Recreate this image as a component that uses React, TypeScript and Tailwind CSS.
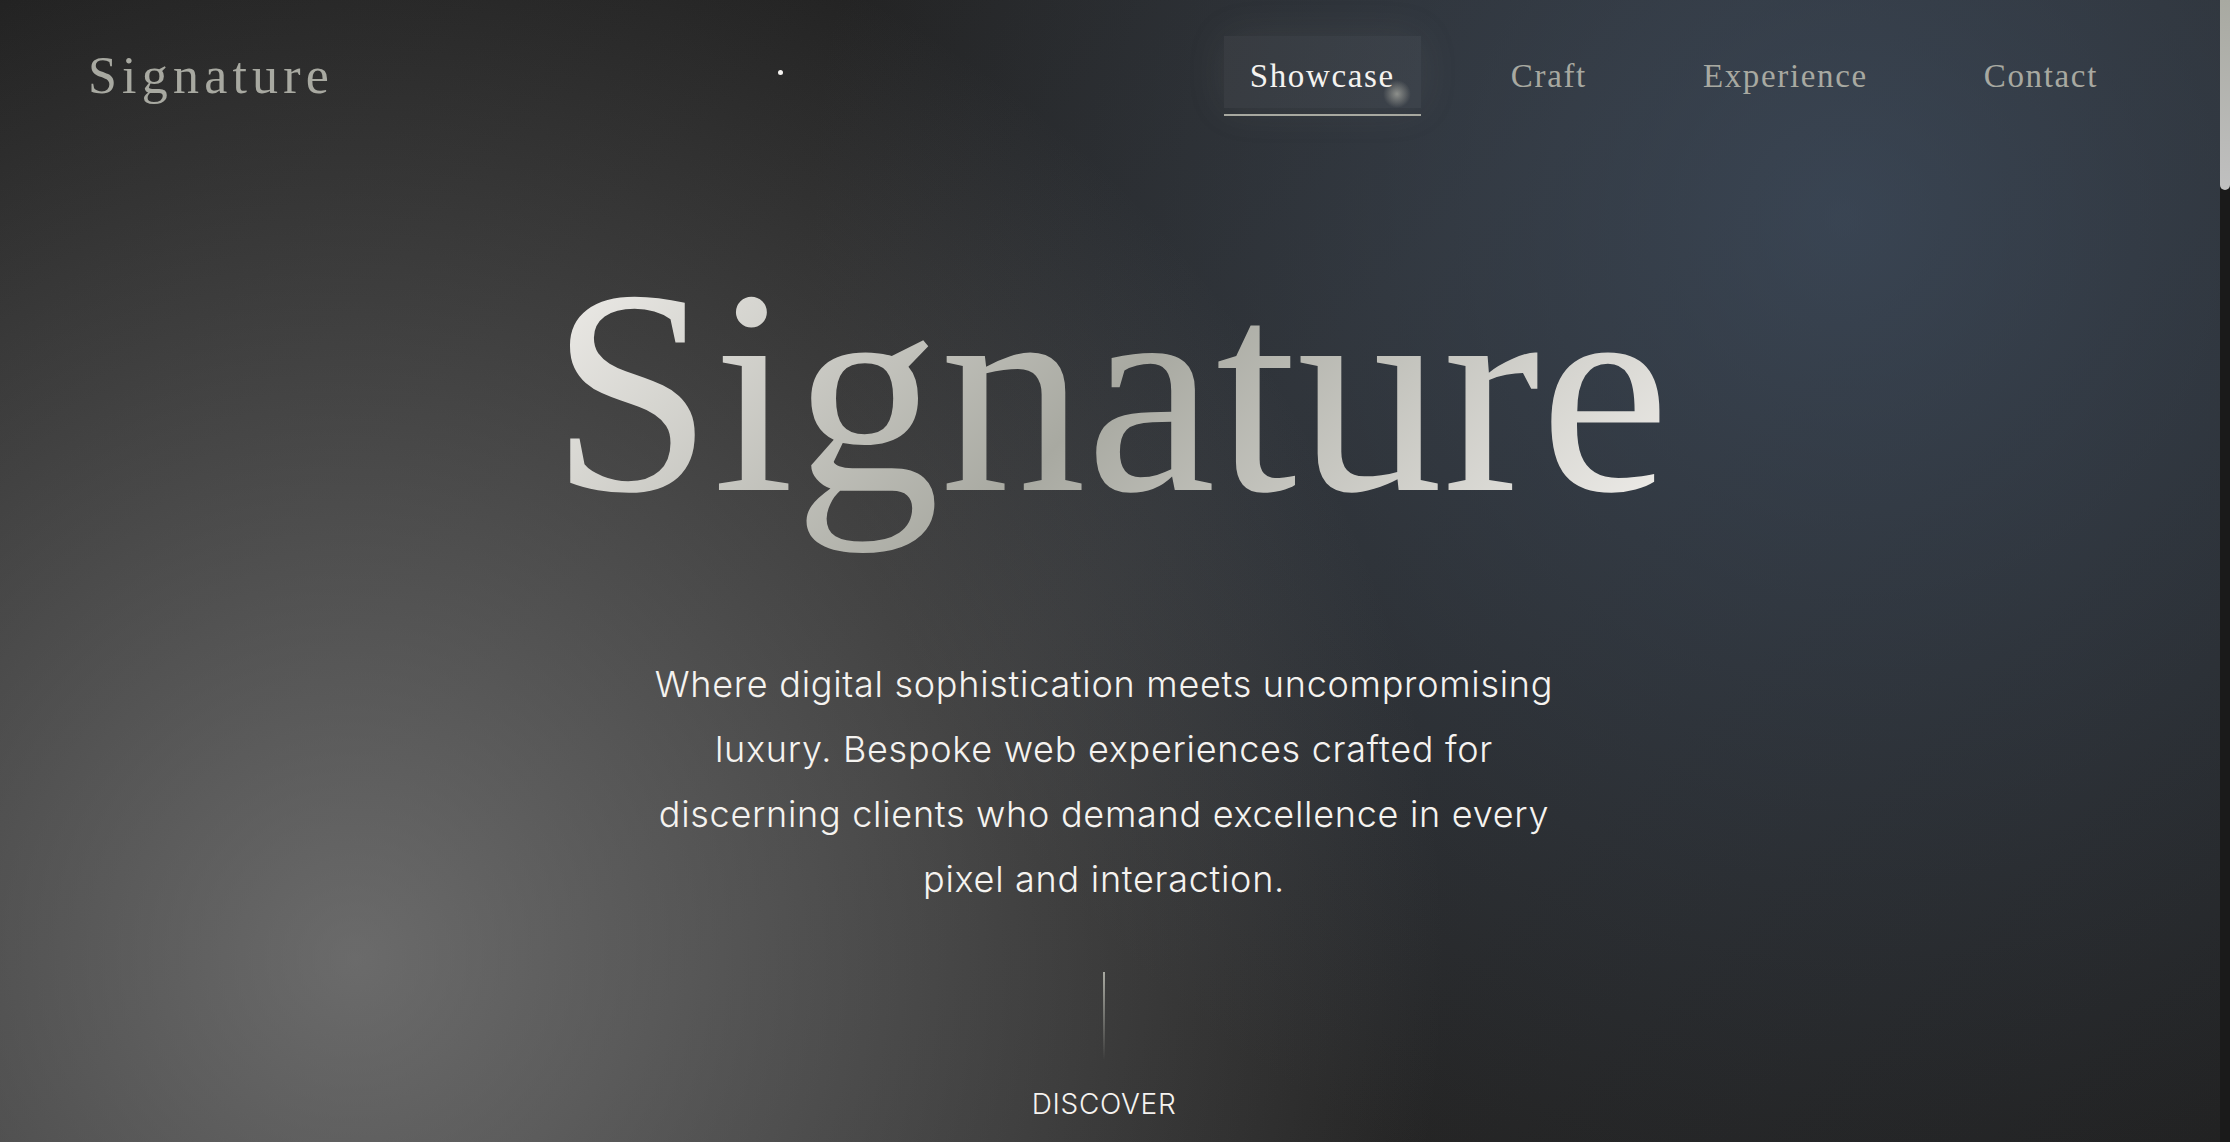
import React, { useState } from 'react';

const links = ['Showcase', 'Craft', 'Experience', 'Contact'];

const App: React.FC = () => {
  const [active, setActive] = useState('Showcase');

  return (
    <div className="flex min-h-screen bg-[#1a1a1a] font-['Inter',sans-serif] text-[#f5f3f0]">
      <div className="relative flex min-h-screen flex-1 flex-col overflow-hidden bg-[radial-gradient(circle_at_16%_84%,rgba(168,168,168,0.53)_0%,transparent_52%),radial-gradient(circle_at_83%_19%,rgba(74,95,122,0.53)_0%,transparent_50%),linear-gradient(135deg,#1e1e1e_0%,#282828_50%,#212121_100%)]">
        <header className="flex items-center justify-between px-22 pt-9">
          <a href="#top" className="font-['Liberation_Serif',serif] text-[52px] leading-20 tracking-widest text-[#a8a9a1]">
            Signature
          </a>
          <nav className="flex items-start gap-16 pr-2">
            {links.map((link) => (
              <a
                key={link}
                href={`#${link.toLowerCase()}`}
                onClick={() => setActive(link)}
                className={`border-b-2 pb-1.5 font-['Liberation_Serif',serif] text-[33px] tracking-wider ${
                  link === active
                    ? 'border-[#a8a9a1] text-[#f5f3f0]'
                    : 'border-transparent text-[#a8a9a1]'
                }`}
              >
                <span
                  className={`block px-6.5 pt-5 pb-3 leading-10 ${
                    link === active ? 'bg-white/5 shadow-[0_0_40px_rgba(168,169,161,0.1)]' : ''
                  }`}
                >
                  {link}
                </span>
              </a>
            ))}
          </nav>
        </header>

        <main className="flex flex-1 flex-col items-center pt-24 text-center">
          <h1 className="bg-[linear-gradient(135deg,#f5f3f0_0%,#a8a9a1_50%,#f5f3f0_100%)] bg-clip-text font-['Liberation_Serif',serif] text-[292px] leading-[360px] text-transparent">
            Signature
          </h1>
          <div className="flex flex-col items-center pt-20 pr-3">
            <p className="max-w-[920px] text-[36px] leading-[65px] font-light tracking-[0.02em]">
              Where digital sophistication meets uncompromising luxury. Bespoke web experiences crafted for
              discerning clients who demand excellence in every pixel and interaction.
            </p>
            <div className="mt-15 h-22 w-0.5 bg-linear-to-b from-[#a8a9a1] to-transparent" />
            <a href="#discover" className="mt-6 text-[28px] leading-10 font-light tracking-wide uppercase">
              Discover
            </a>
          </div>
        </main>

        {/* cursor glow and drifting particle */}
        <div className="pointer-events-none absolute top-20 left-[1383px] size-7 rounded-full bg-[radial-gradient(circle,rgba(168,169,161,0.75)_0%,transparent_70%)]" />
        <div className="pointer-events-none absolute top-[70px] left-[778px] size-[5px] rounded-full bg-[#f5f3f0]" />
      </div>

      <div className="w-2.5 bg-[#1a1a1a]">
        <div className="h-[190px] rounded-b-md bg-linear-to-b from-[#a8a9a1] to-[#c0c0c0]" />
      </div>
    </div>
  );
};

export default App;
